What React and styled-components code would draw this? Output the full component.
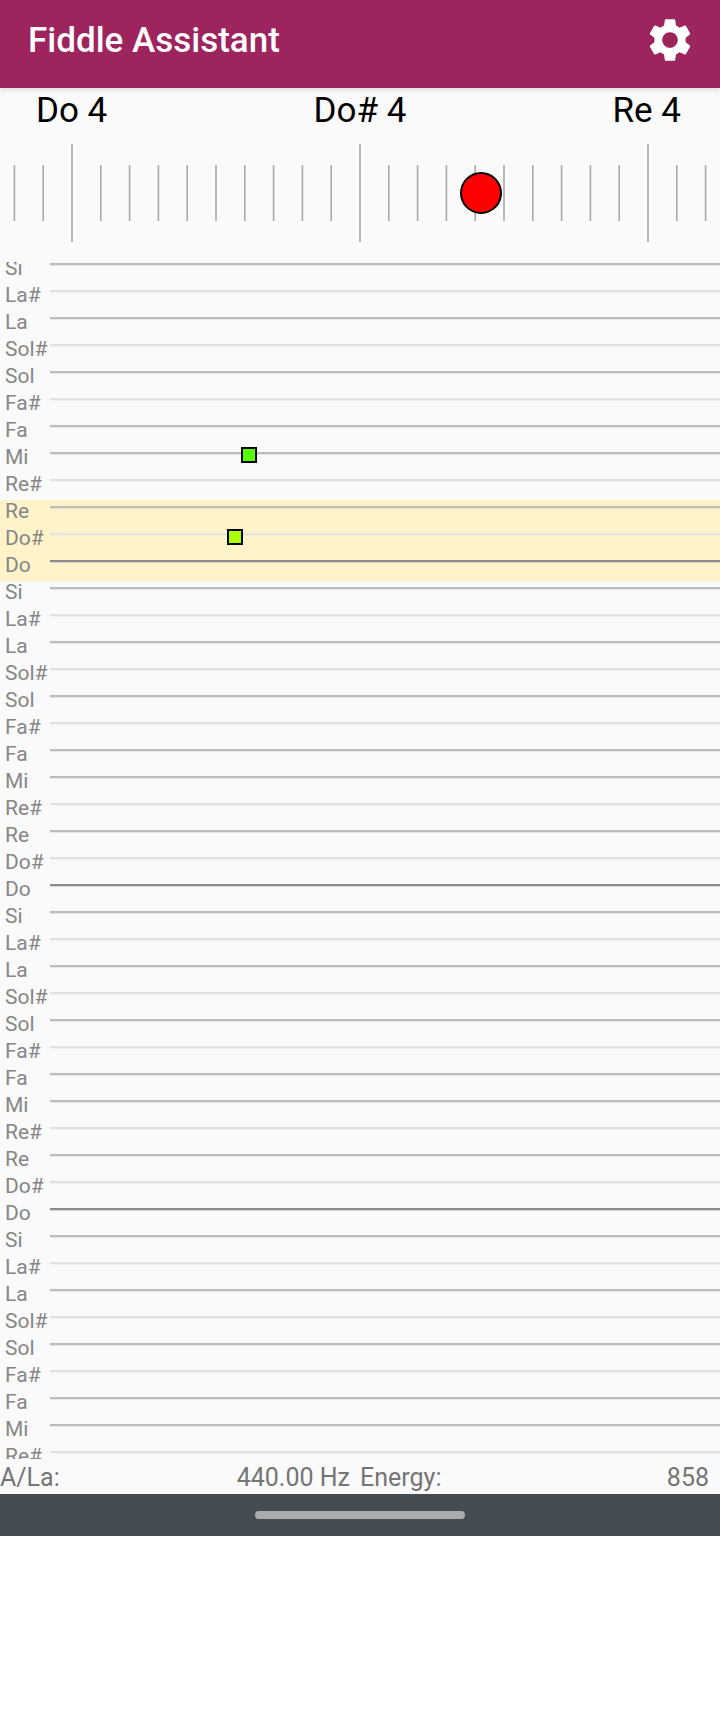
import React from "react";
import styled, { createGlobalStyle } from "styled-components";

const Global = createGlobalStyle`
  html, body { margin: 0; padding: 0; background: #ffffff; }
  body { font-family: Roboto, "Liberation Sans", sans-serif; }
  * { box-sizing: border-box; }
`;

const Screen = styled.div`
  width: 720px;
  height: 1536px;
  display: flex;
  flex-direction: column;
  background: #fafafa;
  overflow: hidden;
`;

const AppBar = styled.header`
  position: relative;
  z-index: 2;
  flex: none;
  height: 88px;
  padding: 0 24px 8px 28px;
  display: flex;
  align-items: center;
  justify-content: space-between;
  background: #9e245e;
  box-shadow: 0 2px 4px rgba(0, 0, 0, 0.12);
`;

const Title = styled.h1`
  margin: 0;
  font-size: 35px;
  font-weight: 500;
  color: #ffffff;
`;

const Gear = styled.svg`
  display: block;
  width: 52px;
  height: 52px;
  fill: #ffffff;
`;

const NoteHeader = styled.div`
  flex: none;
  height: 56px;
  padding: 0 39px 12px 36px;
  display: flex;
  justify-content: space-between;
  align-items: center;
  font-size: 35px;
  color: #000000;
`;

const Dial = styled.div`
  position: relative;
  flex: none;
  height: 118px;
`;

const DialTicks = styled.svg`
  display: block;
  width: 720px;
  height: 118px;
`;

const Needle = styled.div`
  position: absolute;
  left: 460px;
  top: 28px;
  width: 42px;
  height: 42px;
  border-radius: 50%;
  background: #ff0000;
  border: 2px solid #000000;
`;

const Staff = styled.div`
  position: relative;
  flex: none;
  height: 1197px;
  overflow: hidden;
`;

const StaffRows = styled.div`
  margin-top: -5px;
  display: flex;
  flex-direction: column;
`;

const Row = styled.div`
  height: 27px;
  flex: none;
  display: flex;
  align-items: flex-start;
  background: ${(p) => (p.$active ? "#fff3c9" : "transparent")};
`;

const NoteLabel = styled.span`
  flex: none;
  width: 50px;
  padding-left: 5px;
  font-size: 21px;
  line-height: 23px;
  color: #868686;
`;

const Line = styled.span`
  flex: 1;
  height: 2px;
  margin-top: 6px;
  background: ${(p) => (p.$kind === "do" ? "#8a8a8a" : p.$kind === "sharp" ? "#e2e2e2" : "#bdbdbd")};
  box-shadow: 0 1px 0 ${(p) => (p.$kind === "do" ? "rgba(138,138,138,0.3)" : p.$kind === "sharp" ? "rgba(226,226,226,0.3)" : "rgba(189,189,189,0.3)")};
`;

const Marker = styled.div`
  position: absolute;
  width: 16px;
  height: 16px;
  border: 2px solid #000000;
  background: ${(p) => p.$color};
  left: ${(p) => p.$x}px;
  top: ${(p) => p.$y}px;
`;

const StatusBar = styled.div`
  flex: none;
  height: 35px;
  display: grid;
  grid-template-columns: 360px 360px;
  font-size: 25px;
  color: #757575;
  line-height: 38px;
`;

const StatusCell = styled.div`
  display: flex;
  justify-content: space-between;
  padding-right: ${(p) => p.$right}px;
`;

const NavBar = styled.div`
  flex: none;
  height: 42px;
  display: flex;
  align-items: center;
  justify-content: center;
  background: #454d53;
`;

const NavHandle = styled.div`
  width: 210px;
  height: 8px;
  border-radius: 4px;
  background: #a9adaf;
`;

const NOTES = ["Si", "La#", "La", "Sol#", "Sol", "Fa#", "Fa", "Mi", "Re#", "Re", "Do#", "Do"];
const ROWS = Array.from({ length: 45 }, (_, i) => NOTES[i % 12]);
const TICKS = Array.from({ length: 25 }, (_, i) => 14.4 + i * 28.8);

const kindOf = (n) => (n === "Do" ? "do" : n.includes("#") ? "sharp" : "natural");

export default function App() {
  return (
    <Screen>
      <Global />
      <AppBar>
        <Title>Fiddle Assistant</Title>
        <Gear viewBox="0 0 24 24">
          <path d="M19.14 12.94c.04-.3.06-.61.06-.94 0-.32-.02-.64-.07-.94l2.03-1.58c.18-.14.23-.41.12-.61l-1.92-3.32c-.12-.22-.37-.29-.59-.22l-2.39.96c-.5-.38-1.03-.7-1.62-.94l-.36-2.54c-.04-.24-.24-.41-.48-.41h-3.84c-.24 0-.43.17-.47.41l-.36 2.54c-.59.24-1.13.57-1.62.94l-2.39-.96c-.22-.08-.47 0-.59.22L2.74 8.87c-.12.21-.08.47.12.61l2.03 1.58c-.05.3-.09.63-.09.94s.02.64.07.94l-2.03 1.58c-.18.14-.23.41-.12.61l1.92 3.32c.12.22.37.29.59.22l2.39-.96c.5.38 1.03.7 1.62.94l.36 2.54c.05.24.24.41.48.41h3.84c.24 0 .44-.17.47-.41l.36-2.54c.59-.24 1.13-.56 1.62-.94l2.39.96c.22.08.47 0 .59-.22l1.92-3.32c.12-.22.07-.47-.12-.61l-2.01-1.58zM12 15.6c-1.98 0-3.6-1.62-3.6-3.6s1.62-3.6 3.6-3.6 3.6 1.62 3.6 3.6-1.62 3.6-3.6 3.6z" />
        </Gear>
      </AppBar>
      <NoteHeader>
        <span>Do 4</span>
        <span>Do# 4</span>
        <span>Re 4</span>
      </NoteHeader>
      <Dial>
        <DialTicks viewBox="0 0 720 118">
          {TICKS.map((x, i) => {
            const major = (i - 2) % 10 === 0;
            return major ? (
              <rect key={i} x={x - 1} y={0} width={2} height={98} fill="#b8b8b8" />
            ) : (
              <rect key={i} x={x - 0.8} y={21} width={1.6} height={56} fill="#a8a8a8" />
            );
          })}
        </DialTicks>
        <Needle />
      </Dial>
      <Staff>
        <StaffRows>
          {ROWS.map((n, i) => (
            <Row key={i} $active={i >= 9 && i <= 11}>
              <NoteLabel>{n}</NoteLabel>
              <Line $kind={kindOf(n)} />
            </Row>
          ))}
        </StaffRows>
        <Marker $color="#55ff00" $x={241} $y={185} />
        <Marker $color="#aaff00" $x={227} $y={267} />
      </Staff>
      <StatusBar>
        <StatusCell $right={10}>
          <span>A/La:</span>
          <span>440.00 Hz</span>
        </StatusCell>
        <StatusCell $right={11}>
          <span>Energy:</span>
          <span>858</span>
        </StatusCell>
      </StatusBar>
      <NavBar>
        <NavHandle />
      </NavBar>
    </Screen>
  );
}
